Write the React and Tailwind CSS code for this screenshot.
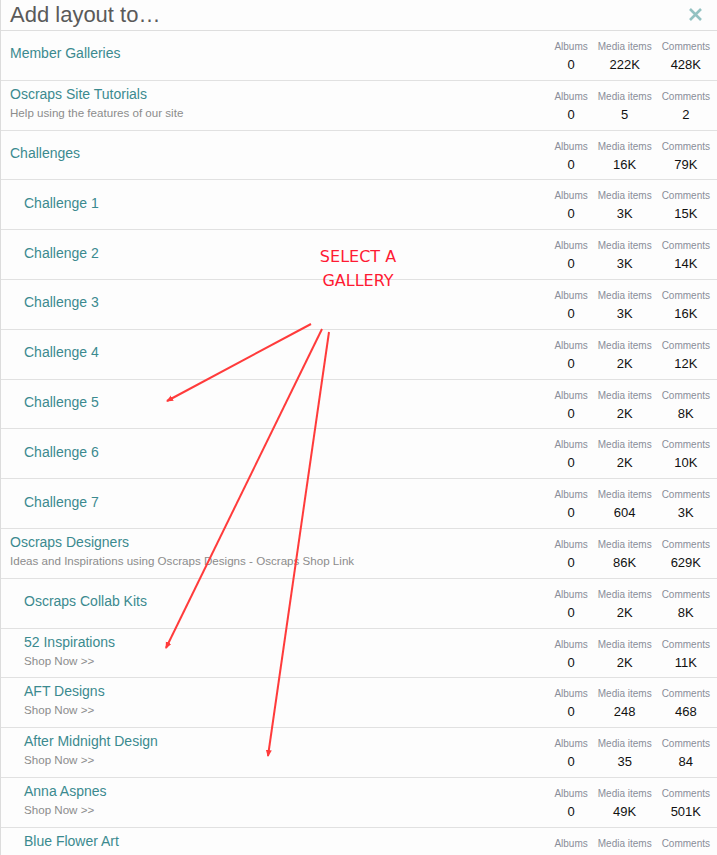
import React from 'react';

const rows = [
  { title: 'Member Galleries', stats: ['0', '222K', '428K'] },
  { title: 'Oscraps Site Tutorials', sub: 'Help using the features of our site', stats: ['0', '5', '2'] },
  { title: 'Challenges', stats: ['0', '16K', '79K'] },
  { title: 'Challenge 1', child: true, stats: ['0', '3K', '15K'] },
  { title: 'Challenge 2', child: true, stats: ['0', '3K', '14K'] },
  { title: 'Challenge 3', child: true, stats: ['0', '3K', '16K'] },
  { title: 'Challenge 4', child: true, stats: ['0', '2K', '12K'] },
  { title: 'Challenge 5', child: true, stats: ['0', '2K', '8K'] },
  { title: 'Challenge 6', child: true, stats: ['0', '2K', '10K'] },
  { title: 'Challenge 7', child: true, stats: ['0', '604', '3K'] },
  { title: 'Oscraps Designers', sub: 'Ideas and Inspirations using Oscraps Designs - Oscraps Shop Link', stats: ['0', '86K', '629K'] },
  { title: 'Oscraps Collab Kits', child: true, stats: ['0', '2K', '8K'] },
  { title: '52 Inspirations', child: true, sub: 'Shop Now >>', stats: ['0', '2K', '11K'] },
  { title: 'AFT Designs', child: true, sub: 'Shop Now >>', stats: ['0', '248', '468'] },
  { title: 'After Midnight Design', child: true, sub: 'Shop Now >>', stats: ['0', '35', '84'] },
  { title: 'Anna Aspnes', child: true, sub: 'Shop Now >>', stats: ['0', '49K', '501K'] },
  { title: 'Blue Flower Art', child: true, sub: 'Shop Now >>', stats: ['0', '', ''] },
];

const labels = ['Albums', 'Media items', 'Comments'];

const Stats = ({ values }) => (
  <div className="flex gap-[10px] pt-[10px] pr-[7px]">
    {labels.map((label, i) => (
      <div key={label} className="flex flex-col items-center">
        <span className="text-[10px] leading-[12px] text-[#8a8d99]">{label}</span>
        <span className="text-[13px] leading-[18px] mt-[3px] text-[#111]">{values[i]}</span>
      </div>
    ))}
  </div>
);

const Row = ({ row }) => (
  <div className="flex justify-between h-[49.8px] border-b border-[#e1e1e1]">
    <div className={`flex flex-col ${row.sub ? 'pt-[3px]' : 'justify-center pb-[4px]'} ${row.child ? 'pl-[23px]' : 'pl-[9px]'}`}>
      <span className="text-[14px] leading-[20px] text-[#3b8a8f]">{row.title}</span>
      {row.sub && <span className="text-[11.6px] leading-[18px] text-[#8c8c8c]">{row.sub}</span>}
    </div>
    <Stats values={row.stats} />
  </div>
);

const App = () => {
  return (
    <div className="relative w-[717px] h-[855px] overflow-hidden bg-[#fdfdfd] border-l border-[#dcdcdc]" style={{ fontFamily: '"Liberation Sans", Arial, sans-serif' }}>
      <div className="flex items-center justify-between h-[31px] border-b border-[#dedede] pl-[9px] pr-[14px]">
        <h1 className="text-[22px] leading-[28px] text-[#5a5a5a]">Add layout to…</h1>
        <svg width="15" height="15" viewBox="0 0 15 15" className="mt-[-2px]">
          <path d="M2 2 L13 13 M13 2 L2 13" stroke="#93c2c2" strokeWidth="2.6" strokeLinecap="butt" />
        </svg>
      </div>
      {rows.map((row) => (
        <Row key={row.title} row={row} />
      ))}

      <div className="absolute left-[304px] top-[245px] w-[106px] text-center text-[16px] leading-[24px] text-[#ff1a33]" style={{ fontFamily: '"DejaVu Sans", sans-serif' }}>
        SELECT A<br />GALLERY
      </div>
      <svg className="absolute inset-0 pointer-events-none" width="717" height="855">
        <defs>
          <marker id="head" markerWidth="8" markerHeight="8" refX="6" refY="3" orient="auto" markerUnits="userSpaceOnUse">
            <path d="M0 0 L7 3 L0 6 Z" fill="#ff3b3b" />
          </marker>
        </defs>
        <g stroke="#ff3b3b" strokeWidth="2" fill="none">
          <line x1="310" y1="324" x2="166" y2="401" markerEnd="url(#head)" />
          <line x1="321" y1="329" x2="165" y2="648" markerEnd="url(#head)" />
          <line x1="328" y1="332" x2="267" y2="756" markerEnd="url(#head)" />
        </g>
      </svg>
    </div>
  );
};

export default App;
